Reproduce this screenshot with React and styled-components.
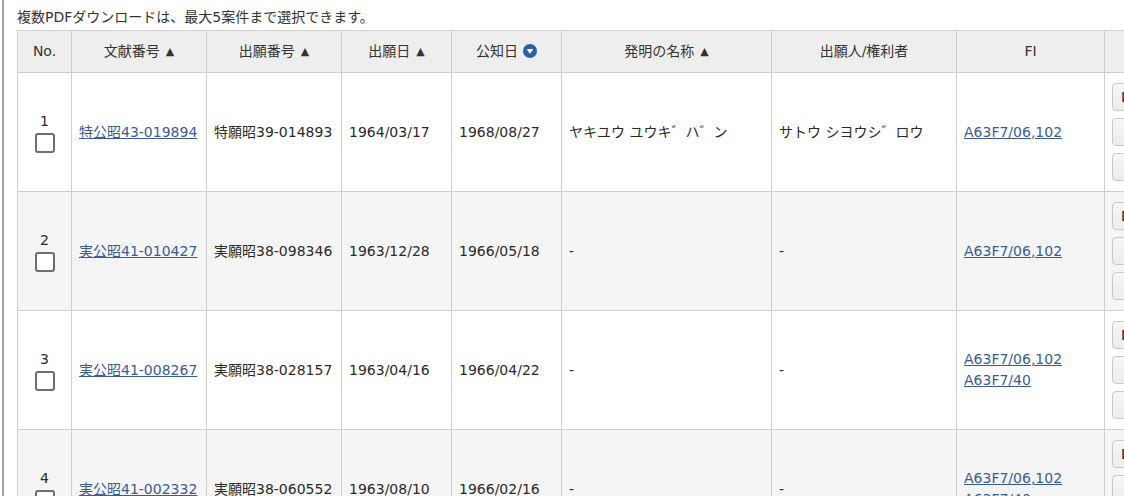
import React from "react"
import styled, { createGlobalStyle } from "styled-components"

const Global = createGlobalStyle`
    html, body {
        margin: 0;
        padding: 0;
        background: #fff;
        overflow: hidden;
    }
    body {
        font-family: "DejaVu Sans", "Noto Sans CJK JP", sans-serif;
        color: #333;
    }
`

const Page = styled.div`
    margin-left: 2px;
    border-left: 2px solid #a3a3a3;
    padding-left: 13px;
    min-height: 496px;
    width: 1300px;
`

const Notice = styled.p`
    margin: 0;
    padding-top: 7px;
    height: 23px;
    line-height: 20px;
    font-size: 14px;
    color: #333;
`

const Table = styled.table`
    border-collapse: collapse;
    table-layout: fixed;
    width: 1207px;
    font-size: 14px;
    line-height: 21px;
`

const Th = styled.th`
    background: #eeeeee;
    border: 1px solid #cfcfcf;
    height: 41px;
    padding: 0;
    font-weight: normal;
    text-align: center;
    color: #333;
`

// small black sort triangle next to a header label
const Arrow = styled.span`
    font-size: 11px;
    margin-left: 6px;
    position: relative;
    top: -1px;
`

const SortIcon = styled.svg`
    margin-left: 5px;
    vertical-align: -2px;
`

const Row = styled.tr`
    background: ${p => (p.$even ? "#f5f5f5" : "#fff")};
`

const Td = styled.td`
    border: 1px solid #cfcfcf;
    height: 118px;
    padding: 0 7px;
    vertical-align: middle;
    text-align: ${p => (p.$center ? "center" : "left")};
    color: #2a2a2a;
    white-space: nowrap;
    overflow: hidden;
`

const NoCell = styled.div`
    display: flex;
    flex-direction: column;
    align-items: center;
    line-height: 18px;
`

const Check = styled.input.attrs({ type: "checkbox" })`
    appearance: none;
    margin: 3px 0 0;
    width: 20px;
    height: 20px;
    border: 2px solid #6e6e6e;
    border-radius: 3px;
    background: #fff;
    box-sizing: border-box;
`

const Link = styled.a`
    color: #3a5c96;
    text-decoration: underline;
    display: block;
`

const Buttons = styled.div`
    display: flex;
    flex-direction: column;
    gap: 7px;
`

const Btn = styled.button`
    width: 100px;
    height: 28px;
    border: 1px solid #c9c9c9;
    border-radius: 4px;
    background: linear-gradient(#f7f7f7, #ececec);
    font-family: inherit;
    font-size: 14px;
    color: #222;
    text-align: ${p => (p.$left ? "left" : "center")};
    padding: 0 0 0 8px;
`

const rows = [
    {
        no: 1,
        doc: "特公昭43-019894",
        app: "特願昭39-014893",
        filed: "1964/03/17",
        pub: "1968/08/27",
        title: "ヤキユウ ユウキ゛ハ゛ン",
        holder: "サトウ シヨウシ゛ロウ",
        fi: ["A63F7/06,102"],
    },
    {
        no: 2,
        doc: "実公昭41-010427",
        app: "実願昭38-098346",
        filed: "1963/12/28",
        pub: "1966/05/18",
        title: "-",
        holder: "-",
        fi: ["A63F7/06,102"],
    },
    {
        no: 3,
        doc: "実公昭41-008267",
        app: "実願昭38-028157",
        filed: "1963/04/16",
        pub: "1966/04/22",
        title: "-",
        holder: "-",
        fi: ["A63F7/06,102", "A63F7/40"],
    },
    {
        no: 4,
        doc: "実公昭41-002332",
        app: "実願昭38-060552",
        filed: "1963/08/10",
        pub: "1966/02/16",
        title: "-",
        holder: "-",
        fi: ["A63F7/06,102", "A63F7/40"],
    },
]

function Sorted() {
    return (
        <SortIcon width="14" height="14" viewBox="0 0 14 14">
            <circle cx="7" cy="7" r="7" fill="#2c5fa8" />
            <path d="M3.6 5 L10.4 5 L7 9.8 Z" fill="#fff" />
        </SortIcon>
    )
}

export default function App() {
    return (
        <Page>
            <Global />
            <Notice>複数PDFダウンロードは、最大5案件まで選択できます。</Notice>
            <Table>
                <colgroup>
                    <col style={{ width: 54 }} />
                    <col style={{ width: 135 }} />
                    <col style={{ width: 135 }} />
                    <col style={{ width: 110 }} />
                    <col style={{ width: 110 }} />
                    <col style={{ width: 210 }} />
                    <col style={{ width: 185 }} />
                    <col style={{ width: 148 }} />
                    <col style={{ width: 120 }} />
                </colgroup>
                <thead>
                    <tr>
                        <Th>No.</Th>
                        <Th>文献番号<Arrow>▲</Arrow></Th>
                        <Th>出願番号<Arrow>▲</Arrow></Th>
                        <Th>出願日<Arrow>▲</Arrow></Th>
                        <Th>公知日<Sorted /></Th>
                        <Th>発明の名称<Arrow>▲</Arrow></Th>
                        <Th>出願人/権利者</Th>
                        <Th>FI</Th>
                        <Th></Th>
                    </tr>
                </thead>
                <tbody>
                    {rows.map((r, i) => (
                        <Row key={r.no} $even={i % 2 === 1}>
                            <Td $center>
                                <NoCell>
                                    <span>{r.no}</span>
                                    <Check />
                                </NoCell>
                            </Td>
                            <Td><Link href="#">{r.doc}</Link></Td>
                            <Td>{r.app}</Td>
                            <Td>{r.filed}</Td>
                            <Td>{r.pub}</Td>
                            <Td>{r.title}</Td>
                            <Td>{r.holder}</Td>
                            <Td>
                                {r.fi.map(f => (
                                    <Link key={f} href="#">{f}</Link>
                                ))}
                            </Td>
                            <Td>
                                <Buttons>
                                    <Btn $left>Download</Btn>
                                    <Btn>経過情報</Btn>
                                    <Btn>OPD</Btn>
                                </Buttons>
                            </Td>
                        </Row>
                    ))}
                </tbody>
            </Table>
        </Page>
    )
}
